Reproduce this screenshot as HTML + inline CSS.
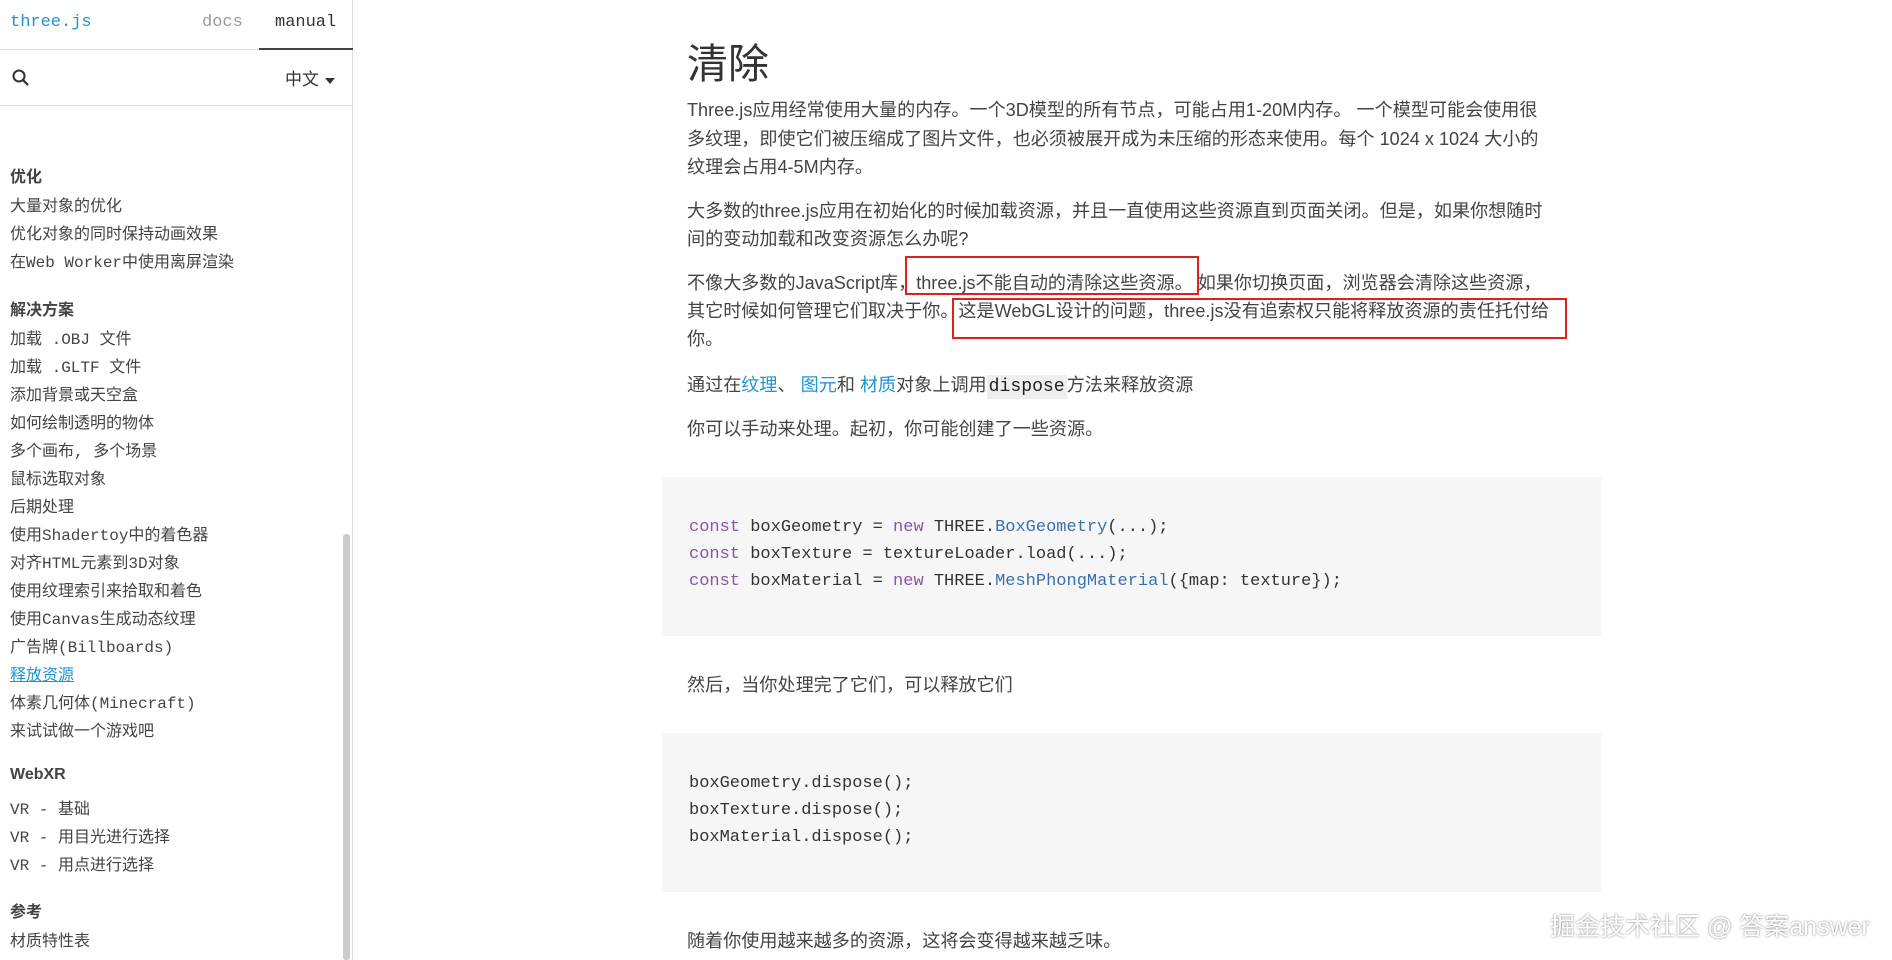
<!DOCTYPE html>
<html><head><meta charset="utf-8"><style>
*{margin:0;padding:0;box-sizing:border-box}
body{width:1892px;height:960px;overflow:hidden;background:#fff;font-family:"Liberation Sans","Noto Sans CJK SC",sans-serif;color:#444;position:relative}
.side{position:absolute;left:0;top:0;width:353px;height:960px;border-right:1px solid #ddd;background:#fff}
.hdr{height:50px;border-bottom:1px solid #ddd;position:relative;font-family:"Liberation Mono","Noto Sans CJK SC",monospace;font-size:17px}
.hdr .logo{position:absolute;left:10px;top:13px;color:#2194ce}
.hdr .docs{position:absolute;left:202px;top:13px;color:#999}
.hdr .man{position:absolute;left:259px;top:0;width:94px;height:50px;border-bottom:2px solid #444;padding:13px 0 0 16px;color:#333}
.srch{height:56px;border-bottom:1px solid #ddd;position:relative}
.lang{position:absolute;left:285px;top:15px;font-size:17px;color:#333}
.nav{position:absolute;left:10px;top:0;font-family:"Liberation Mono","Noto Sans CJK SC",monospace;font-size:16px;color:#444}
.nav div{position:absolute;left:0;white-space:nowrap}
.nav b{position:absolute;left:0;white-space:nowrap;font-weight:bold;font-family:"Liberation Sans","Noto Sans CJK SC",sans-serif}
.sb{position:absolute;left:343px;top:534px;width:7px;height:426px;background:#ccc;border-radius:3px}
.main{position:absolute;left:687px;top:0;font-size:18.1px;color:#444}
.main .l{position:absolute;left:0;white-space:nowrap}
.blue{color:#2194ce}
.code{position:absolute;left:662px;width:939px;background:#f6f6f6;font-family:"Liberation Mono",monospace;font-size:17px;color:#333}
.code div{position:absolute;left:27px;white-space:pre}
.k{color:#8a55a6}.f{color:#3a6fb0}
.box{position:absolute;border:2px solid #e02020}
.wm{position:absolute;left:1550px;top:907px;font-size:25px;color:#fff;text-shadow:0 0 2px #777;white-space:nowrap}
</style></head><body>
<div class="side">
<div class="hdr"><span class="logo">three.js</span><span class="docs">docs</span><span class="man">manual</span></div>
<div class="srch">
<svg style="position:absolute;left:11px;top:18px" width="20" height="20" viewBox="0 0 20 20"><circle cx="8" cy="8" r="5.5" fill="none" stroke="#333" stroke-width="2"/><path d="M12 12l5 5" stroke="#333" stroke-width="2.2"/></svg>
<span class="lang">中文 <svg width="12" height="8" viewBox="0 0 12 8"><path d="M1 1h10L6 7z" fill="#333"/></svg></span>
</div>
<div class="nav">
<b style="top:163px">优化</b>
<div style="top:192px">大量对象的优化</div>
<div style="top:220px">优化对象的同时保持动画效果</div>
<div style="top:248px">在Web Worker中使用离屏渲染</div>
<b style="top:296px">解决方案</b>
<div style="top:325px">加载 .OBJ 文件</div>
<div style="top:353px">加载 .GLTF 文件</div>
<div style="top:381px">添加背景或天空盒</div>
<div style="top:409px">如何绘制透明的物体</div>
<div style="top:437px">多个画布, 多个场景</div>
<div style="top:465px">鼠标选取对象</div>
<div style="top:493px">后期处理</div>
<div style="top:521px">使用Shadertoy中的着色器</div>
<div style="top:549px">对齐HTML元素到3D对象</div>
<div style="top:577px">使用纹理索引来拾取和着色</div>
<div style="top:605px">使用Canvas生成动态纹理</div>
<div style="top:633px">广告牌(Billboards)</div>
<div style="top:661px;color:#2194ce;text-decoration:underline">释放资源</div>
<div style="top:689px">体素几何体(Minecraft)</div>
<div style="top:717px">来试试做一个游戏吧</div>
<b style="top:766px">WebXR</b>
<div style="top:795px">VR - 基础</div>
<div style="top:823px">VR - 用目光进行选择</div>
<div style="top:851px">VR - 用点进行选择</div>
<b style="top:898px">参考</b>
<div style="top:927px">材质特性表</div>
</div>
<div class="sb"></div>
</div>

<div class="main">
<div class="l" style="top:30px;font-size:41px;color:#333">清除</div>
<div class="l" style="top:96px">Three.js应用经常使用大量的内存。一个3D模型的所有节点，可能占用1-20M内存。 一个模型可能会使用很</div>
<div class="l" style="top:125px">多纹理，即使它们被压缩成了图片文件，也必须被展开成为未压缩的形态来使用。每个 1024 x 1024 大小的</div>
<div class="l" style="top:153px">纹理会占用4-5M内存。</div>
<div class="l" style="top:197px">大多数的three.js应用在初始化的时候加载资源，并且一直使用这些资源直到页面关闭。但是，如果你想随时</div>
<div class="l" style="top:225px">间的变动加载和改变资源怎么办呢?</div>
<div class="l" style="top:269px">不像大多数的JavaScript库，three.js不能自动的清除这些资源。 如果你切换页面，浏览器会清除这些资源，</div>
<div class="l" style="top:297px">其它时候如何管理它们取决于你。这是WebGL设计的问题，three.js没有追索权只能将释放资源的责任托付给</div>
<div class="l" style="top:325px">你。</div>
<div class="l" style="top:371px">通过在<span class="blue">纹理</span>、 <span class="blue">图元</span>和 <span class="blue">材质</span>对象上调用<span style="font-family:'Liberation Mono',monospace;background:#eee;padding:2px 2px;color:#222">dispose</span>方法来释放资源</div>
<div class="l" style="top:415px">你可以手动来处理。起初，你可能创建了一些资源。</div>
<div class="l" style="top:671px">然后，当你处理完了它们，可以释放它们</div>
<div class="l" style="top:927px">随着你使用越来越多的资源，这将会变得越来越乏味。</div>
</div>

<div class="code" style="top:477px;height:159px">
<div style="top:41px"><span class="k">const</span> boxGeometry = <span class="k">new</span> THREE.<span class="f">BoxGeometry</span>(...);</div>
<div style="top:68px"><span class="k">const</span> boxTexture = textureLoader.load(...);</div>
<div style="top:95px"><span class="k">const</span> boxMaterial = <span class="k">new</span> THREE.<span class="f">MeshPhongMaterial</span>({map: texture});</div>
</div>
<div class="code" style="top:733px;height:159px">
<div style="top:41px">boxGeometry.dispose();</div>
<div style="top:68px">boxTexture.dispose();</div>
<div style="top:95px">boxMaterial.dispose();</div>
</div>

<div class="box" style="left:905px;top:256px;width:294px;height:39px"></div>
<div class="box" style="left:952px;top:298px;width:615px;height:41px"></div>
<div class="wm">掘金技术社区 @ 答案answer</div>
</body></html>
